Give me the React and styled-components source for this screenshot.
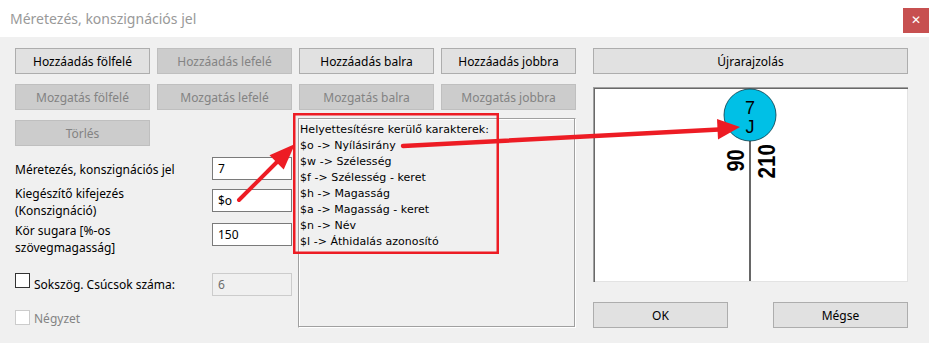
import React from 'react'
import styled, { createGlobalStyle, css } from 'styled-components'

const GlobalStyle = createGlobalStyle`
  html, body {
    margin: 0;
    padding: 0;
    background: #f0f0f0;
    overflow: hidden;
  }
`

const ui = `"Noto Sans", "Open Sans", sans-serif`

const Window = styled.div`
  position: relative;
  width: 929px;
  height: 343px;
  background: #f0f0f0;
  font-family: ${ui};
  font-size: 12px;
  color: #000;
`

const TitleBar = styled.div`
  display: flex;
  justify-content: space-between;
  align-items: flex-start;
  height: 37px;
  background: #fff;
  padding-left: 10px;
`

const Title = styled.div`
  font-size: 14px;
  line-height: 37px;
  color: #999;
`

const CloseButton = styled.div`
  width: 26px;
  height: 25px;
  margin-top: 8px;
  background: #c75050;
  color: #fff;
  font-size: 12px;
  line-height: 24px;
  text-align: center;
`

const Body = styled.div`
  display: flex;
  gap: 17px;
  padding: 11px 0 0 15px;
`

const LeftSection = styled.div`
  display: flex;
  flex-direction: column;
  width: 561px;
`

const ButtonGrid = styled.div`
  display: grid;
  grid-template-columns: repeat(4, 135px);
  grid-auto-rows: 26px;
  column-gap: 7px;
  row-gap: 10px;
`

const Button = styled.button`
  box-sizing: border-box;
  height: 26px;
  width: ${p => p.$width || '100%'};
  margin: 0;
  padding: 0;
  font-family: ${ui};
  font-size: 12px;
  background: #e1e1e1;
  border: 1px solid #adadad;
  color: #000;
  ${p => p.disabled && css`
    background: #cccccc;
    border-color: #bfbfbf;
    color: #838383;
  `}
`

const Lower = styled.div`
  display: flex;
  gap: 6px;
`

const FormColumn = styled.div`
  display: flex;
  flex-direction: column;
  width: 277px;
  padding-top: 10px;
`

const FormRow = styled.div`
  display: grid;
  grid-template-columns: 197px 80px;
  align-items: start;
  margin-top: ${p => p.$mt}px;
`

const Label = styled.div`
  line-height: 17px;
  margin-top: ${p => p.$mt || 0}px;
  color: ${p => (p.$disabled ? '#838383' : '#000')};
`

const Input = styled.div`
  box-sizing: border-box;
  height: 23px;
  margin-top: ${p => p.$mt || 0}px;
  padding-left: 5px;
  line-height: 21px;
  background: #fff;
  border: 1px solid #7a7a7a;
  ${p => p.$disabled && css`
    background: #f0f0f0;
    border-color: #cccccc;
    color: #6d6d6d;
  `}
`

const CheckLabel = styled.label`
  display: flex;
  align-items: flex-start;
  gap: 4px;
`

const Box = styled.span`
  box-sizing: border-box;
  width: 15px;
  height: 15px;
  flex: none;
  background: #fff;
  border: 1px solid ${p => (p.$disabled ? '#cccccc' : '#333')};
`

const HelpBox = styled.div`
  box-sizing: border-box;
  width: 278px;
  height: 210px;
  margin-top: 8px;
  padding: 3px 0 0 1px;
  border: 1px solid;
  border-color: #a0a0a0 #fff #fff #a0a0a0;
  box-shadow: inset -1px -1px 0 #a0a0a0, inset 1px 1px 0 #fff;
  font-family: "DejaVu Sans", Verdana, sans-serif;
  font-size: 11px;
  line-height: 16px;
  letter-spacing: 0.05px;
`

const RightColumn = styled.div`
  display: flex;
  flex-direction: column;
  width: 315px;
`

const Preview = styled.div`
  margin-top: 13px;
  height: 195px;
  background: #fff;
  box-shadow: inset 1px 1px 0 #a0a0a0, inset 2px 2px 0 #696969,
    inset -1px -1px 0 #e3e3e3;
  svg {
    display: block;
  }
`

const DialogButtons = styled.div`
  display: flex;
  justify-content: space-between;
  margin-top: 20px;
`

const Overlay = styled.svg`
  position: absolute;
  top: 0;
  left: 0;
  pointer-events: none;
`

const helpLines = [
  'Helyettesítésre kerülő karakterek:',
  '$o -> Nyílásirány',
  '$w -> Szélesség',
  '$f -> Szélesség - keret',
  '$h -> Magasság',
  '$a -> Magasság - keret',
  '$n -> Név',
  '$l -> Áthidalás azonosító'
]

const PreviewDrawing = () => (
  <svg width="315" height="195" viewBox="593 87 315 195">
    <line x1="750" y1="141" x2="750" y2="281" stroke="#000" strokeWidth="1.2" />
    <circle cx="750" cy="115" r="26" fill="#00c0e6" stroke="#0a3a48" strokeWidth="0.8" />
    <g fontFamily="'Liberation Sans', Arial, sans-serif" fill="#000">
      <text x="750" y="114" fontSize="18" textAnchor="middle">7</text>
      <text x="750" y="133" fontSize="18" textAnchor="middle">J</text>
      <text transform="translate(743.5 171.5) rotate(-90) scale(1 1.22)" fontSize="20" fontWeight="bold">90</text>
      <text transform="translate(774.5 178.5) rotate(-90) scale(1.03 1.2)" fontSize="20" fontWeight="bold">210</text>
    </g>
  </svg>
)

const Annotations = () => (
  <Overlay width="929" height="343" viewBox="0 0 929 343">
    <rect x="294.25" y="114.25" width="203.5" height="138.5" fill="none" stroke="#ed1c24" strokeWidth="2.5" />
    <line x1="239" y1="200" x2="277" y2="162" stroke="#ed1c24" strokeWidth="4" strokeLinecap="round" />
    <polygon points="295,144 283.7,169.5 269.5,155.3" fill="#ed1c24" />
    <line x1="403" y1="146" x2="719" y2="129.5" stroke="#ed1c24" strokeWidth="4.5" strokeLinecap="round" />
    <polygon points="740,127 717,119 718,139.5" fill="#ed1c24" />
  </Overlay>
)

export default function App() {
  return (
    <Window>
      <GlobalStyle />
      <TitleBar>
        <Title>Méretezés, konszignációs jel</Title>
        <CloseButton>✕</CloseButton>
      </TitleBar>
      <Body>
        <LeftSection>
          <ButtonGrid>
            <Button>Hozzáadás fölfelé</Button>
            <Button disabled>Hozzáadás lefelé</Button>
            <Button>Hozzáadás balra</Button>
            <Button>Hozzáadás jobbra</Button>
            <Button disabled>Mozgatás fölfelé</Button>
            <Button disabled>Mozgatás lefelé</Button>
            <Button disabled>Mozgatás balra</Button>
            <Button disabled>Mozgatás jobbra</Button>
          </ButtonGrid>
          <Lower>
            <FormColumn>
              <Button disabled $width="135px">Törlés</Button>
              <FormRow $mt={11}>
                <Label $mt={4}>Méretezés, konszignációs jel</Label>
                <Input>7</Input>
              </FormRow>
              <FormRow $mt={5}>
                <Label>Kiegészítő kifejezés<br />(Konszignáció)</Label>
                <Input $mt={4}>$o</Input>
              </FormRow>
              <FormRow $mt={3}>
                <Label>Kör sugara [%-os<br />szövegmagasság]</Label>
                <Input $mt={1}>150</Input>
              </FormRow>
              <FormRow $mt={17}>
                <CheckLabel>
                  <Box />
                  <Label $mt={3}>Sokszög. Csúcsok száma:</Label>
                </CheckLabel>
                <Input $disabled>6</Input>
              </FormRow>
              <FormRow $mt={14}>
                <CheckLabel>
                  <Box $disabled />
                  <Label $disabled>Négyzet</Label>
                </CheckLabel>
              </FormRow>
            </FormColumn>
            <HelpBox>
              {helpLines.map(line => (
                <div key={line}>{line}</div>
              ))}
            </HelpBox>
          </Lower>
        </LeftSection>
        <RightColumn>
          <Button>Újrarajzolás</Button>
          <Preview>
            <PreviewDrawing />
          </Preview>
          <DialogButtons>
            <Button $width="135px">OK</Button>
            <Button $width="135px">Mégse</Button>
          </DialogButtons>
        </RightColumn>
      </Body>
      <Annotations />
    </Window>
  )
}
